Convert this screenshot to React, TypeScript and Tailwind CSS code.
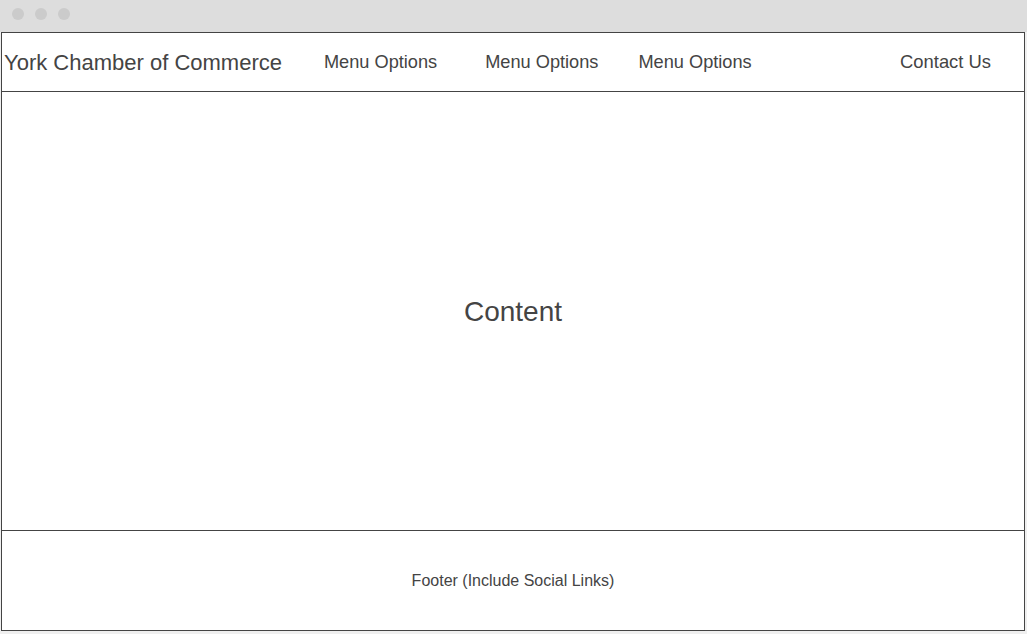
export default function App() {
  const font = { fontFamily: '"Liberation Sans", Arial, sans-serif' };
  return (
    <div className="w-[1027px] h-[634px] bg-[#efefef] flex flex-col" style={font}>
      <div className="h-[32px] bg-[#dddddd] flex items-start gap-[11px] pl-[12px] pt-[8px] shrink-0">
        <span className="w-[12px] h-[12px] rounded-full bg-[#cbcbcb]" />
        <span className="w-[12px] h-[12px] rounded-full bg-[#cbcbcb]" />
        <span className="w-[12px] h-[12px] rounded-full bg-[#cbcbcb]" />
      </div>
      <div className="ml-[1px] w-[1024px] h-[599px] border border-[#444444] bg-white flex flex-col text-[#444444]">
        <header className="h-[59px] shrink-0 border-b border-[#444444] flex items-center">
          <span className="ml-[2px] text-[22px]">York Chamber of Commerce</span>
          <nav className="flex items-center text-[18.2px] pt-[2px]">
            <a className="ml-[42px]">Menu Options</a>
            <a className="ml-[48px]">Menu Options</a>
            <a className="ml-[40px]">Menu Options</a>
          </nav>
          <a className="ml-auto mr-[33px] text-[18.4px]">Contact Us</a>
        </header>
        <main className="flex-1 flex items-center justify-center pt-[2px]">
          <span className="text-[28px]">Content</span>
        </main>
        <footer className="h-[100px] shrink-0 border-t border-[#444444] flex items-center justify-center">
          <span className="text-[16px]">Footer (Include Social Links)</span>
        </footer>
      </div>
    </div>
  );
}
